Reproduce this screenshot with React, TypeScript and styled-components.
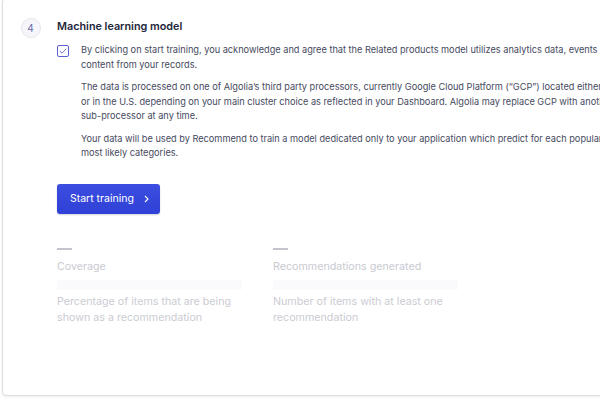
import React from "react";
import styled, { createGlobalStyle } from "styled-components";

const Global = createGlobalStyle`
  html, body { margin: 0; padding: 0; background: #ffffff; }
  body { font-family: Inter, "Noto Sans", sans-serif; }
  * { box-sizing: border-box; }
`;

const Page = styled.div`
  width: 600px;
  height: 400px;
  overflow: hidden;
  padding: 0 0 2px 2px;
  background: #ffffff;
`;

const Card = styled.div`
  width: 640px;
  height: 398px;
  margin-top: -2px;
  border: 1px solid #dddee3;
  border-radius: 4px;
  background: #ffffff;
  box-shadow: 0 1px 2px rgba(35, 38, 59, 0.08);
  display: grid;
  grid-template-columns: 53px 1fr;
  align-items: start;
  padding-top: 19px;
`;

const StepCol = styled.div`
  display: flex;
  justify-content: center;
  padding-left: 2px;
`;

const StepCircle = styled.div`
  width: 20px;
  height: 20px;
  border-radius: 50%;
  background: #f5f5fa;
  border: 1px solid #e6e6f0;
  color: #6b6ca8;
  font-size: 10px;
  display: flex;
  align-items: center;
  justify-content: center;
`;

const Content = styled.div`
  display: flex;
  flex-direction: column;
  padding-left: 1px;
`;

const Title = styled.h2`
  margin: 0;
  font-size: 10.8px;
  font-weight: 600;
  color: #23263b;
  line-height: 18px;
`;

const ConsentRow = styled.div`
  display: flex;
  gap: 12px;
  margin-top: 7px;
`;

const Checkbox = styled.div`
  flex: none;
  width: 12px;
  height: 12px;
  margin-top: 2px;
  border: 1px solid #5a5fd6;
  border-radius: 2px;
  display: flex;
  align-items: center;
  justify-content: center;
`;

const Paragraphs = styled.div`
  display: flex;
  flex-direction: column;
  gap: 8px;
  width: 560px;
`;

const Para = styled.p`
  margin: 0;
  font-size: 9.2px;
  line-height: 14.5px;
  color: #464a5e;
  white-space: nowrap;
`;

const Button = styled.button`
  align-self: flex-start;
  margin-top: 23px;
  height: 30px;
  width: 103px;
  border: none;
  border-radius: 3px;
  background: linear-gradient(180deg, #3c4ee0 0%, #2f41d6 100%);
  color: #ffffff;
  font-family: inherit;
  font-size: 10.5px;
  white-space: nowrap;
  display: flex;
  align-items: center;
  gap: 10px;
  padding: 0 0 0 13px;
  box-shadow: 0 1px 2px rgba(35, 38, 59, 0.2);
`;

const Metrics = styled.div`
  display: grid;
  grid-template-columns: 216px 216px;
  margin-top: 34px;
`;

const Metric = styled.div`
  display: flex;
  flex-direction: column;
`;

const Dash = styled.div`
  width: 15px;
  height: 2px;
  background: #c4c5cc;
`;

const MetricLabel = styled.div`
  margin-top: 10px;
  font-size: 10.7px;
  line-height: 14px;
  color: #c9cad1;
`;

const Skeleton = styled.div`
  margin-top: 6px;
  width: 185px;
  height: 10px;
  background: #fafafc;
  border-radius: 2px;
`;

const MetricDesc = styled.div`
  margin-top: 4px;
  font-size: 10.7px;
  line-height: 16px;
  color: #cbccd3;
  width: 185px;
`;

export default function App() {
  return (
    <>
      <Global />
      <Page>
        <Card>
          <StepCol>
            <StepCircle>4</StepCircle>
          </StepCol>
          <Content>
            <Title>Machine learning model</Title>
            <ConsentRow>
              <Checkbox>
                <svg width="8" height="6" viewBox="0 0 8 6">
                  <path d="M0.8 3 L3 5.2 L7.2 0.8" fill="none" stroke="#6f73d9" strokeWidth="1" />
                </svg>
              </Checkbox>
              <Paragraphs>
                <Para>
                  By clicking on start training, you acknowledge and agree that the Related products model utilizes analytics data, events
                  <br />
                  content from your records.
                </Para>
                <Para>
                  The data is processed on one of Algolia’s third party processors, currently Google Cloud Platform (“GCP”) located either
                  <br />
                  or in the U.S. depending on your main cluster choice as reflected in your Dashboard. Algolia may replace GCP with another
                  <br />
                  sub-processor at any time.
                </Para>
                <Para>
                  Your data will be used by Recommend to train a model dedicated only to your application which predict for each popular
                  <br />
                  most likely categories.
                </Para>
              </Paragraphs>
            </ConsentRow>
            <Button>
              Start training
              <svg width="5" height="8" viewBox="0 0 5 8">
                <path d="M1 1 L4 4 L1 7" fill="none" stroke="#ffffff" strokeWidth="1.1" />
              </svg>
            </Button>
            <Metrics>
              <Metric>
                <Dash />
                <MetricLabel>Coverage</MetricLabel>
                <Skeleton />
                <MetricDesc>Percentage of items that are being shown as a recommendation</MetricDesc>
              </Metric>
              <Metric>
                <Dash />
                <MetricLabel>Recommendations generated</MetricLabel>
                <Skeleton />
                <MetricDesc>Number of items with at least one recommendation</MetricDesc>
              </Metric>
            </Metrics>
          </Content>
        </Card>
      </Page>
    </>
  );
}
